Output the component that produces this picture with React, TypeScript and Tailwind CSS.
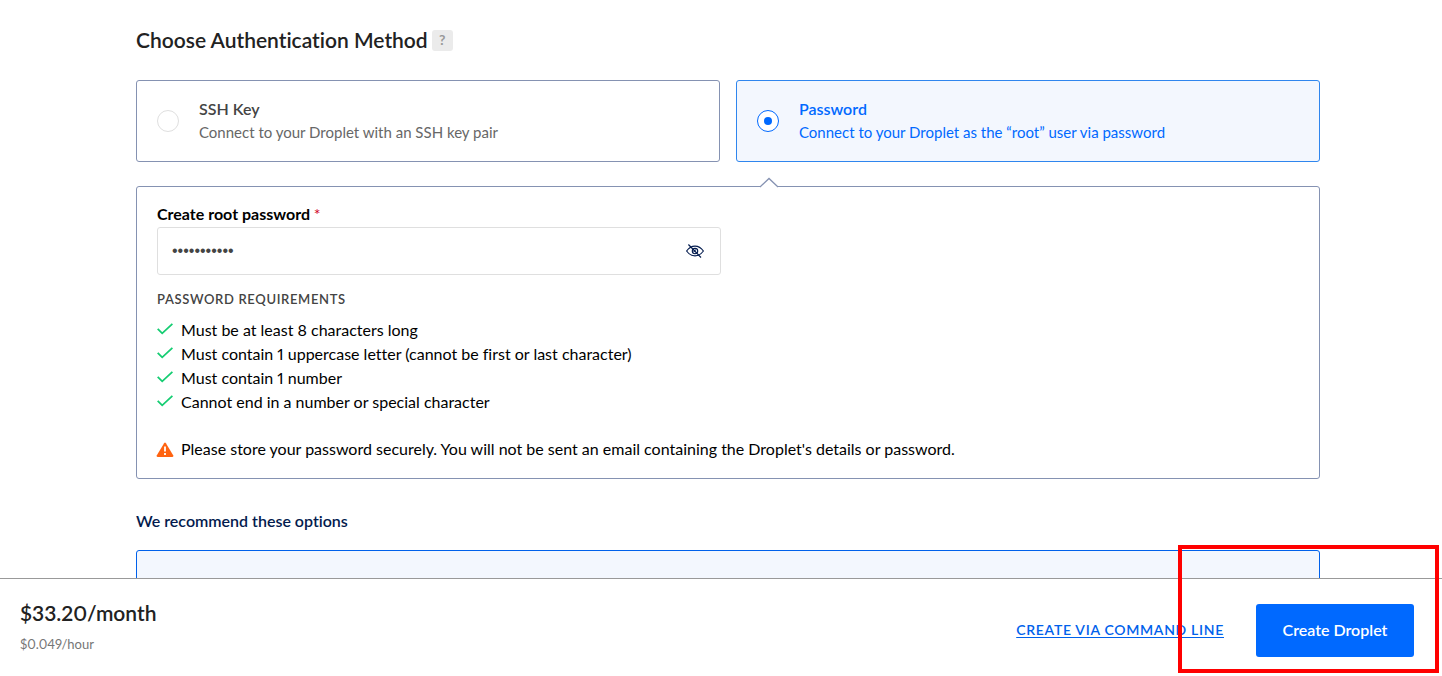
import { useState } from "react";

const requirements = [
  "Must be at least 8 characters long",
  "Must contain 1 uppercase letter (cannot be first or last character)",
  "Must contain 1 number",
  "Cannot end in a number or special character",
];

const methods = [
  { id: "ssh", title: "SSH Key", text: "Connect to your Droplet with an SSH key pair" },
  { id: "password", title: "Password", text: "Connect to your Droplet as the “root” user via password" },
];

function Check() {
  return (
    <svg className="h-4 w-4 shrink-0" viewBox="0 0 16 16" fill="none" stroke="#15cd72" strokeWidth="1.8" aria-hidden="true">
      <path d="M0.7 6.8 5.2 11.3 15.4 1.9" />
    </svg>
  );
}

function Warning() {
  return (
    <svg className="h-4 w-4 shrink-0 overflow-visible" viewBox="0 0 16 16" aria-hidden="true">
      <path d="M7.1 2.200Q8 1 8.900 2.200L16.300 14.500Q16.700 15.900 15.400 16H0.600Q-0.700 15.900-0.300 14.500Z" fill="#ff6310" />
      <path d="M7.100 5.500h1.800v5H7.100zM7.100 12h1.800v1.900H7.100z" fill="#fff" />
    </svg>
  );
}

function EyeOff() {
  return (
    <svg width="18" height="14" viewBox="0 0 18 14" fill="none" stroke="#031b4e" strokeWidth="1.150" aria-hidden="true">
      <path d="M0.600 7C3 3.600 5.800 2.100 9 2.100S15 3.600 17.400 7C15 10.400 12.200 11.900 9 11.900S3 10.400 0.600 7Z" />
      <circle cx="9" cy="7" r="2.700" />
      <path d="M8 8Q8 6 10 6" />
      <path d="M2.400 0.500 15 13.500" />
    </svg>
  );
}

export default function App() {
  const [method, setMethod] = useState("password");
  const [password, setPassword] = useState("Dropl3tpass");
  const [visible, setVisible] = useState(false);

  return (
    <div className="min-h-screen bg-white font-['Lato',sans-serif] text-base text-black proportional-nums [font-variant-ligatures:none]">
      <main className="pt-6 pr-[122px] pl-[136px]">
        <div className="flex h-8 items-center gap-1">
          <h1 className="text-[21px] font-semibold text-[#222]">Choose Authentication Method</h1>
          <button type="button" aria-label="Help" className="h-[21px] w-[21px] rounded-[3px] bg-[#ebebeb] text-sm leading-5 font-bold text-[#999]">
            ?
          </button>
        </div>

        <div className="mt-6 grid grid-cols-2 gap-4">
          {methods.map((m) => (
            <label
              key={m.id}
              className="flex h-[82px] items-center gap-5 rounded-[3px] border border-[#8592b2] px-5 text-[#676767] has-checked:border-[#2f86ee] has-checked:bg-[#f3f7fe] has-checked:text-[#0069ff]"
            >
              <input
                type="radio"
                name="method"
                value={m.id}
                checked={method === m.id}
                onChange={() => setMethod(m.id)}
                className="grid h-[22px] w-[22px] shrink-0 appearance-none place-content-center rounded-full border border-[#dfdfdf] bg-white checked:border-[#0069ff] checked:before:h-2 checked:before:w-2 checked:before:rounded-full checked:before:bg-[#0069ff] checked:before:content-['']"
              />
              <span className="flex flex-col pb-0.5">
                <span className={m.id === method ? "leading-6 font-semibold" : "leading-6 font-semibold text-[#444]"}>{m.title}</span>
                <span className="text-[15px] leading-[22px]">{m.text}</span>
              </span>
            </label>
          ))}
        </div>

        <section className="relative mt-6 rounded-[3px] border border-[#8592b2] px-5 pt-[15px] pb-[17px]">
          <svg className="absolute -top-[10px] left-[calc(50%+31px)]" width="20" height="11" viewBox="0 0 20 11" aria-hidden="true">
            <path d="M1 10 10 1.500 19 10" fill="#fff" stroke="#8592b2" strokeWidth="1.300" />
            <path d="M2 10.500H18" stroke="#fff" strokeWidth="1.200" />
          </svg>
          <label htmlFor="root-password" className="mb-px block leading-6 font-bold">
            Create root password <span className="font-normal text-[#d0021b]">*</span>
          </label>
          <div className="flex h-12 w-[calc(50%-7px)] items-center rounded-[3px] border border-[#dfdfdf] pr-4 pl-3.5">
            <input
              id="root-password"
              type={visible ? "text" : "password"}
              value={password}
              onChange={(e) => setPassword(e.target.value)}
              className="min-w-0 flex-1 font-['Liberation_Sans',sans-serif] text-base text-[#444] outline-none"
            />
            <button type="button" aria-label="Show password" onClick={() => setVisible(!visible)}>
              <EyeOff />
            </button>
          </div>
          <h2 className="mt-3.5 text-[13px] leading-5 font-semibold tracking-wider text-[#444]">PASSWORD REQUIREMENTS</h2>
          <ul className="mt-[9px]">
            {requirements.map((r) => (
              <li key={r} className="flex h-6 items-center gap-2">
                <Check />
                {r}
              </li>
            ))}
          </ul>
          <p className="mt-[23px] flex h-6 items-center gap-2">
            <Warning />
            Please store your password securely. You will not be sent an email containing the Droplet's details or password.
          </p>
        </section>

        <h2 className="mt-[30px] leading-6 font-semibold text-[#031b4e]">We recommend these options</h2>
        <div className="mt-[17px] h-24 rounded-[3px] border border-[#0061eb] bg-[#f3f7fe]" />
      </main>

      <footer className="fixed inset-x-0 bottom-0 flex h-[98px] items-center justify-between border-t border-[#999] bg-white pr-7 pl-5">
        <div className="pb-[3px]">
          <p className="text-[21px] leading-8 font-semibold text-[#222]">$33.20/month</p>
          <p className="mt-1 text-[13px] leading-[22px] text-[#767676]">$0.049/hour</p>
        </div>
        <div className="flex items-center gap-8 pt-1.5">
          <a href="#command-line" className="pb-0.5 text-sm font-semibold tracking-wider text-[#0061eb] underline underline-offset-2">
            CREATE VIA COMMAND LINE
          </a>
          <button type="button" className="h-[53px] w-[158px] rounded-[3px] bg-[#0069ff] pb-0.5 font-semibold text-white">
            Create Droplet
          </button>
        </div>
        <div className="pointer-events-none absolute right-[3px] bottom-[3px] h-32 w-[261px] border-4 border-[#f00]" />
      </footer>
    </div>
  );
}
